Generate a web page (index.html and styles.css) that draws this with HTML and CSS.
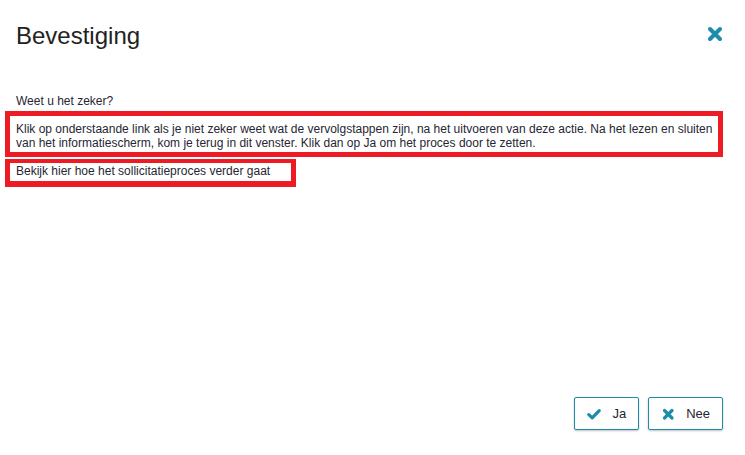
FILE: index.html
```html
<!DOCTYPE html>
<html lang="nl">
<head>
<meta charset="utf-8">
<title>Bevestiging</title>
<link rel="stylesheet" href="styles.css">
</head>
<body>
<div class="dialog">
  <header class="dialog-header">
    <h1 class="dialog-title">Bevestiging</h1>
    <button class="close" aria-label="Sluiten">
      <svg width="16" height="16" viewBox="0 0 16 16"><path d="M3 3 L13 13 M13 3 L3 13" stroke="#1b8caa" stroke-width="4" stroke-linecap="round" fill="none"/></svg>
    </button>
  </header>
  <div class="dialog-body">
    <p class="para">Weet u het zeker?</p>
    <p class="para marked">Klik op onderstaande link als je niet zeker weet wat de vervolgstappen zijn, na het uitvoeren van deze actie. Na het lezen en sluiten van het informatiescherm, kom je terug in dit venster. Klik dan op Ja om het proces door te zetten.<span class="mark mark-wide"></span></p>
    <p class="para marked">Bekijk hier hoe het sollicitatieproces verder gaat<span class="mark mark-short"></span></p>
  </div>
  <footer class="dialog-footer">
    <button class="btn">
      <svg class="btn-icon" width="14" height="14" viewBox="0 0 14 14"><path d="M1.8 7.6 L5.2 10.8 L12.2 3.6" stroke="#1b8caa" stroke-width="3.2" stroke-linecap="round" stroke-linejoin="round" fill="none"/></svg>
      <span>Ja</span>
    </button>
    <button class="btn">
      <svg class="btn-icon" width="14" height="14" viewBox="0 0 14 14"><path d="M3.5 3.5 L11 11 M11 3.5 L3.5 11" stroke="#1b8caa" stroke-width="3.2" stroke-linecap="round" fill="none"/></svg>
      <span>Nee</span>
    </button>
  </footer>
</div>
</body>
</html>
```
FILE: styles.css
```css
html, body {
  margin: 0;
  padding: 0;
  background: #ffffff;
}

body {
  font-family: "Liberation Sans", Arial, sans-serif;
  color: #262633;
}

.dialog {
  height: 100vh;
  box-sizing: border-box;
  display: flex;
  flex-direction: column;
  padding: 22px 23px 25px 16px;
}

.dialog-header {
  display: flex;
  justify-content: space-between;
  align-items: flex-start;
}

.dialog-title {
  margin: 0;
  font-size: 24px;
  line-height: 28px;
  font-weight: normal;
  color: #222222;
}

.close {
  margin: 4px -1px 0 0;
  padding: 0;
  border: 0;
  background: none;
  width: 16px;
  height: 16px;
  display: flex;
}

.dialog-body {
  margin-top: 44px;
  font-size: 12px;
  line-height: 14px;
}

.para {
  margin: 0 0 14px 0;
}

.marked {
  position: relative;
}

.mark {
  position: absolute;
  box-sizing: border-box;
  border: 5px solid #ed1c24;
  pointer-events: none;
}

.mark-wide {
  left: -11px;
  top: -11px;
  right: -1px;
  bottom: -7px;
}

.mark-short {
  left: -11px;
  top: -5px;
  width: 291px;
  height: 28px;
  border-top-width: 4px;
  border-bottom-width: 6px;
}

.dialog-footer {
  margin-top: auto;
  margin-right: -1px;
  display: flex;
  justify-content: flex-end;
  gap: 9px;
}

.btn {
  height: 33px;
  box-sizing: border-box;
  display: flex;
  align-items: center;
  gap: 11px;
  padding: 0 12px;
  border: 1px solid #1b8caa;
  border-radius: 2px;
  background: #ffffff;
  box-shadow: 0 1px 2px rgba(0, 0, 0, 0.25);
  font-family: "Liberation Sans", Arial, sans-serif;
  font-size: 13px;
  color: #262633;
}

.btn-icon {
  flex: none;
}
```
